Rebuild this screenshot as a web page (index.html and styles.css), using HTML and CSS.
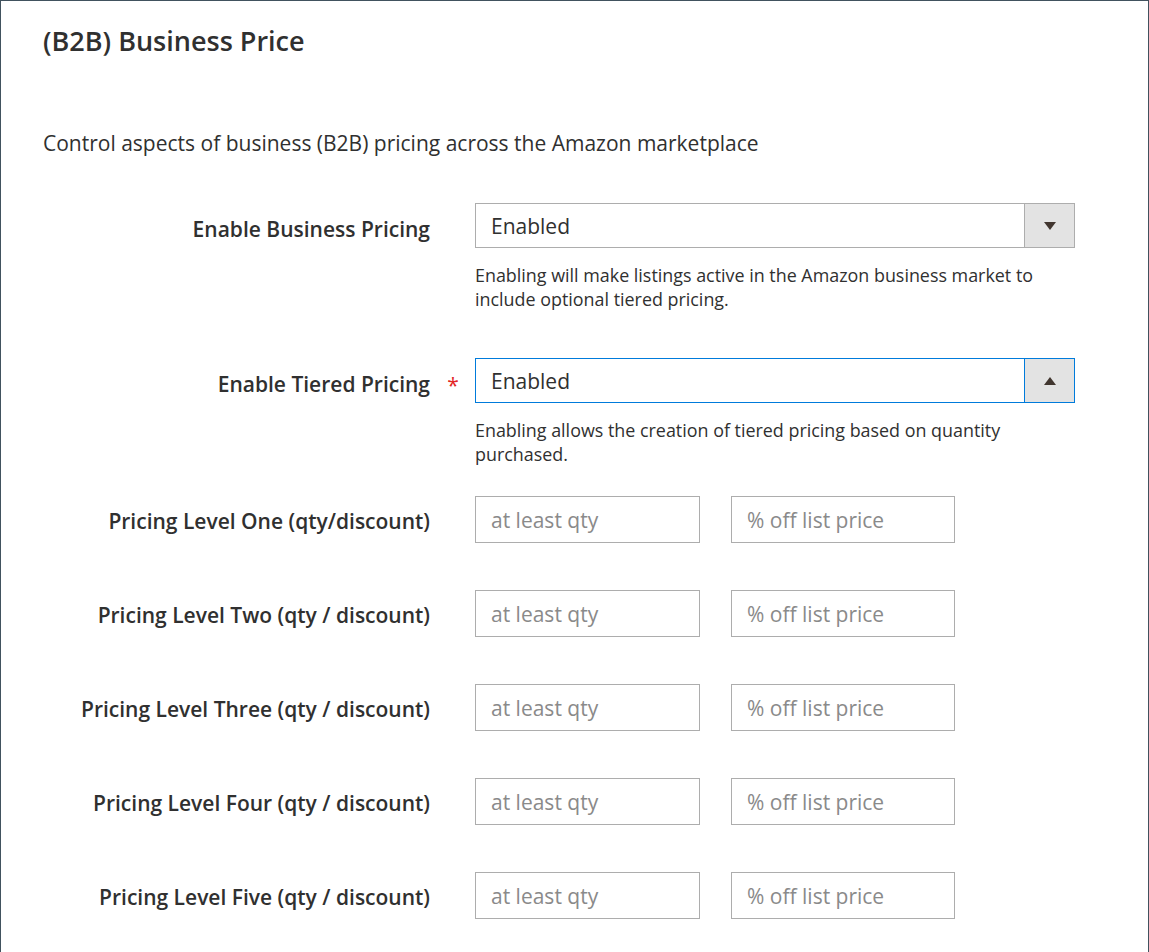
FILE: index.html
```html
<!DOCTYPE html>
<html>
<head>
<meta charset="utf-8">
<link rel="stylesheet" href="styles.css">
</head>
<body>
<div class="frame">
  <h2 class="title">(B2B) Business Price</h2>
  <p class="desc">Control aspects of business (B2B) pricing across the Amazon marketplace</p>

  <div class="row">
    <label class="label">Enable Business Pricing</label>
    <span class="req"></span>
    <div class="control">
      <div class="select">
        <span class="select-value">Enabled</span>
        <span class="select-btn"><span class="tri-down"></span></span>
      </div>
      <p class="note">Enabling will make listings active in the Amazon business market to include optional tiered pricing.</p>
    </div>
  </div>

  <div class="row row-second">
    <label class="label">Enable Tiered Pricing</label>
    <span class="req">*</span>
    <div class="control">
      <div class="select focused">
        <span class="select-value">Enabled</span>
        <span class="select-btn"><span class="tri-up"></span></span>
      </div>
      <p class="note">Enabling allows the creation of tiered pricing based on quantity purchased.</p>
    </div>
  </div>

  <div class="row row-level first-level">
    <label class="label">Pricing Level One (qty/discount)</label>
    <span class="req"></span>
    <div class="pair">
      <input class="input" type="text" placeholder="at least qty">
      <input class="input" type="text" placeholder="% off list price">
    </div>
  </div>
  <div class="row row-level">
    <label class="label">Pricing Level Two (qty / discount)</label>
    <span class="req"></span>
    <div class="pair">
      <input class="input" type="text" placeholder="at least qty">
      <input class="input" type="text" placeholder="% off list price">
    </div>
  </div>
  <div class="row row-level">
    <label class="label">Pricing Level Three (qty / discount)</label>
    <span class="req"></span>
    <div class="pair">
      <input class="input" type="text" placeholder="at least qty">
      <input class="input" type="text" placeholder="% off list price">
    </div>
  </div>
  <div class="row row-level">
    <label class="label">Pricing Level Four (qty / discount)</label>
    <span class="req"></span>
    <div class="pair">
      <input class="input" type="text" placeholder="at least qty">
      <input class="input" type="text" placeholder="% off list price">
    </div>
  </div>
  <div class="row row-level">
    <label class="label">Pricing Level Five (qty / discount)</label>
    <span class="req"></span>
    <div class="pair">
      <input class="input" type="text" placeholder="at least qty">
      <input class="input" type="text" placeholder="% off list price">
    </div>
  </div>
</div>
</body>
</html>
```

FILE: styles.css
```css
html, body {
  margin: 0;
  padding: 0;
  background: #ffffff;
}
body {
  font-family: "Open Sans", "Noto Sans", sans-serif;
  color: #303030;
}
.frame {
  box-sizing: border-box;
  width: 1149px;
  height: 952px;
  border: 1px solid #41525e;
  border-bottom: none;
  padding: 0 42px;
  overflow: hidden;
}
.title {
  margin: 24px 0 0;
  font-size: 27px;
  font-weight: 600;
  line-height: 32px;
  color: #303030;
}
.desc {
  margin: 72px 0 0;
  font-size: 21px;
  line-height: 28px;
  color: #303030;
}
.row {
  display: flex;
  align-items: flex-start;
}
.desc + .row {
  margin-top: 46px;
}
.label {
  width: 387px;
  flex: none;
  text-align: right;
  font-size: 21px;
  font-weight: 600;
  line-height: 28px;
  padding-top: 12px;
  color: #303030;
}
.req {
  width: 45px;
  flex: none;
  text-align: center;
  color: #e22626;
  font-size: 21px;
  line-height: 28px;
  padding-top: 13px;
  padding-left: 1px;
  box-sizing: border-box;
}
.control {
  width: 600px;
  flex: none;
}
.select {
  box-sizing: border-box;
  height: 45px;
  border: 1px solid #adadad;
  display: flex;
  align-items: stretch;
  background: #fff;
}
.select.focused {
  border-color: #007bdb;
}
.select-value {
  flex: 1;
  padding-left: 15px;
  padding-top: 2px;
  font-size: 21px;
  line-height: 41px;
  color: #303030;
}
.select-btn {
  width: 49px;
  flex: none;
  background: #e3e3e3;
  border-left: 1px solid #adadad;
  display: flex;
  align-items: center;
  justify-content: center;
}
.select.focused .select-btn {
  border-left-color: #007bdb;
}
.tri-down {
  width: 0;
  height: 0;
  border-left: 6px solid transparent;
  border-right: 6px solid transparent;
  border-top: 8px solid #41362f;
}
.tri-up {
  width: 0;
  height: 0;
  border-left: 6px solid transparent;
  border-right: 6px solid transparent;
  border-bottom: 8px solid #41362f;
}
.note {
  margin: 15px 0 0;
  font-size: 17.9px;
  line-height: 24px;
  color: #303030;
}
.row-second {
  margin-top: 47px;
}
.first-level {
  margin-top: 30px;
}
.row-level + .row-level {
  margin-top: 47px;
}
.row-level .label {
  padding-top: 11px;
}
.pair {
  display: flex;
  gap: 31px;
}
.input {
  box-sizing: border-box;
  width: 225px;
  height: 47px;
  margin: 0;
  border: 1px solid #adadad;
  border-radius: 0;
  padding: 0 15px;
  font-family: "Open Sans", "Noto Sans", sans-serif;
  font-size: 21px;
  color: #303030;
  background: #fff;
  outline: none;
}
.input + .input {
  width: 224px;
}
.input::placeholder {
  color: #8a8a8a;
  opacity: 1;
}
```
